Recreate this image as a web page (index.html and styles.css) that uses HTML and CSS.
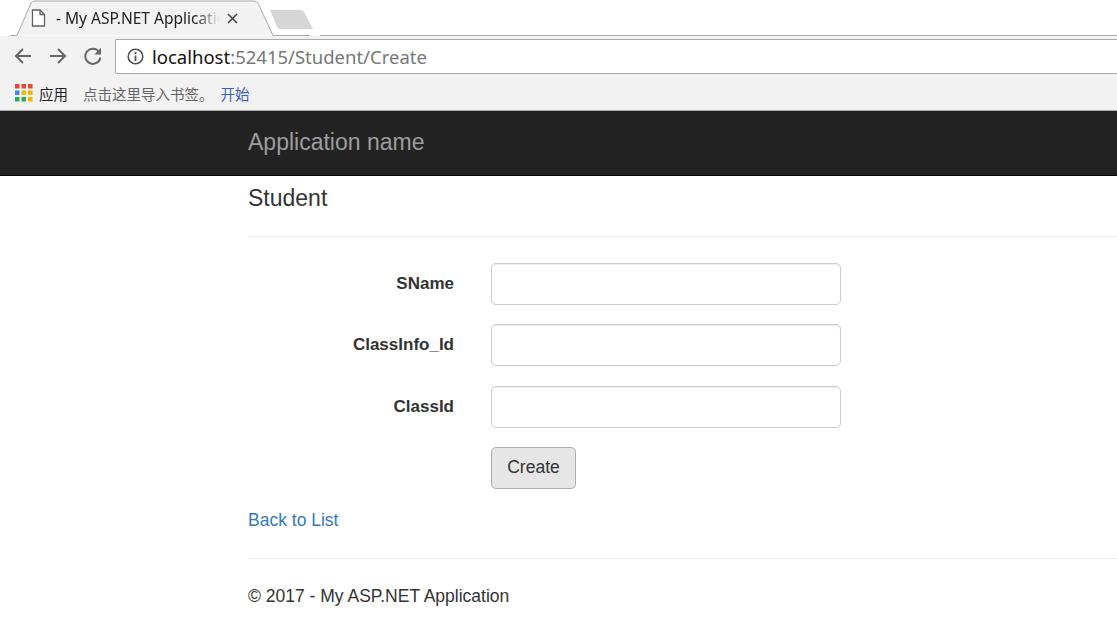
FILE: index.html
```html
<!DOCTYPE html>
<html lang="en">
<head>
    <meta charset="UTF-8">
    <title>Create - My ASP.NET Application</title>
    <link rel="stylesheet" href="styles.css">
</head>
<body>

    <div class="tab-strip">
        <svg class="tab-shape" width="300" height="37" viewBox="0 0 300 37">
            <path d="M0 35.5H7L21 3Q22 1 25 1H244Q247 1 248 3L263 35.5H300" fill="#f2f2f2" stroke="#a9a9a9"/>
            <path d="M261 10H291Q294 10 295 12L304 29H271Q269 29 268 27Z" fill="#d6d6d6" transform="translate(-1 0)"/>
        </svg>
        <div class="tab">
            <svg class="tab-icon" width="15" height="18" viewBox="0 0 15 18">
                <path d="M1.5 1H9L13.5 5.5V17H1.5ZM9 1V5.5H13.5" fill="#fff" stroke="#5f6368" stroke-width="1.3"/>
            </svg>
            <span class="tab-title">- My ASP.NET Application</span>
            <svg class="tab-close" width="11" height="11" viewBox="0 0 11 11">
                <path d="M1 1L10 10M10 1L1 10" stroke="#444" stroke-width="1.5"/>
            </svg>
        </div>
    </div>

    <div class="toolbar">
        <svg class="nav-icon" width="20" height="20" viewBox="0 0 20 20">
            <path d="M18 10H3M10 3L3 10L10 17" fill="none" stroke="#666" stroke-width="2"/>
        </svg>
        <svg class="nav-icon" width="20" height="20" viewBox="0 0 20 20">
            <path d="M2 10H17M10 3L17 10L10 17" fill="none" stroke="#666" stroke-width="2"/>
        </svg>
        <svg class="nav-icon" width="20" height="20" viewBox="0 0 20 20">
            <path d="M16.2 6A7.6 7.6 0 1 0 17.4 11.5" fill="none" stroke="#666" stroke-width="2"/>
            <path d="M18 1.8V8.5H11.3Z" fill="#666"/>
        </svg>
        <div class="address">
            <svg class="info-icon" width="17" height="17" viewBox="0 0 17 17">
                <circle cx="8.5" cy="8.5" r="7.3" fill="none" stroke="#555" stroke-width="1.6"/>
                <path d="M8.5 7.5V13M8.5 4V6" stroke="#555" stroke-width="1.8"/>
            </svg>
            <span class="host">localhost</span><span class="url-rest">:52415/Student/Create</span>
        </div>
    </div>

    <div class="bookmarks">
        <svg class="apps-icon" width="18" height="18" viewBox="0 0 18 18">
            <rect x="0" y="0" width="4.5" height="4.5" fill="#e8453c"/>
            <rect x="6.5" y="0" width="4.5" height="4.5" fill="#e8453c"/>
            <rect x="13" y="0" width="4.5" height="4.5" fill="#e8453c"/>
            <rect x="0" y="6.5" width="4.5" height="4.5" fill="#3f86e8"/>
            <rect x="6.5" y="6.5" width="4.5" height="4.5" fill="#f4b400"/>
            <rect x="13" y="6.5" width="4.5" height="4.5" fill="#f4b400"/>
            <rect x="0" y="13" width="4.5" height="4.5" fill="#34a853"/>
            <rect x="6.5" y="13" width="4.5" height="4.5" fill="#34a853"/>
            <rect x="13" y="13" width="4.5" height="4.5" fill="#f4b400"/>
        </svg>
        <span class="apps-label">应用</span>
        <span class="bookmark-hint">点击这里导入书签。</span>
        <a class="bookmark-link" href="#">开始</a>
    </div>

    <div class="navbar">
        <a class="navbar-brand" href="#">Application name</a>
    </div>

    <div class="container">
        <h4>Student</h4>
        <hr class="hr-top">

        <form class="form-horizontal">
            <div class="form-group">
                <label class="control-label">SName</label>
                <input class="form-control" type="text">
            </div>
            <div class="form-group">
                <label class="control-label">ClassInfo_Id</label>
                <input class="form-control" type="text">
            </div>
            <div class="form-group">
                <label class="control-label">ClassId</label>
                <input class="form-control" type="text">
            </div>
            <div class="form-group">
                <span class="control-label"></span>
                <button class="btn" type="button">Create</button>
            </div>
        </form>

        <a class="back-link" href="#">Back to List</a>
        <hr class="hr-bottom">
        <footer>© 2017 - My ASP.NET Application</footer>
    </div>

</body>
</html>
```

FILE: styles.css
```css
* {
    box-sizing: border-box;
}

html, body {
    height: 622px;
    overflow: hidden;
}

body {
    margin: 0;
    font-family: "Liberation Sans", Arial, sans-serif;
    font-size: 17px;
    color: #333;
    background-color: #fff;
}

a {
    text-decoration: none;
}

/* browser chrome */
.tab-strip {
    position: relative;
    height: 36px;
    background-color: #fff;
}

.tab-shape {
    position: absolute;
    left: 0;
    top: 0;
    width: 100%;
    max-width: 320px;
}

.tab-strip::after {
    content: "";
    position: absolute;
    left: 320px;
    right: 0;
    bottom: 0;
    height: 1px;
    background-color: #a9a9a9;
}

.tab {
    position: relative;
    display: flex;
    align-items: center;
    width: 247px;
    height: 36px;
    padding-left: 31px;
}

.tab-icon {
    flex-shrink: 0;
}

.tab-title {
    width: 164px;
    margin-left: 10px;
    overflow: hidden;
    white-space: nowrap;
    font-family: "Noto Sans", "Liberation Sans", sans-serif;
    font-size: 15.5px;
    color: #222;
    -webkit-mask-image: linear-gradient(to right, #000 85%, transparent 100%);
    mask-image: linear-gradient(to right, #000 85%, transparent 100%);
}

.tab-close {
    margin-left: 7px;
    flex-shrink: 0;
}

.toolbar {
    display: flex;
    align-items: center;
    height: 40px;
    padding: 0 0 0 13px;
    background-color: #f2f2f2;
}

.nav-icon {
    flex-shrink: 0;
    margin-right: 15px;
}

.address {
    display: flex;
    align-items: center;
    flex: 1;
    height: 35px;
    margin-left: -3px;
    padding-left: 11px;
    background-color: #fff;
    border: 1px solid #a9a9a9;
    border-right: none;
    border-radius: 2px 0 0 2px;
    font-family: "Noto Sans", "Liberation Sans", sans-serif;
    font-size: 18.5px;
}

.info-icon {
    margin-right: 8px;
}

.host {
    color: #111;
}

.url-rest {
    color: #777;
}

.bookmarks {
    display: flex;
    align-items: center;
    height: 35px;
    padding-left: 15px;
    background-color: #f2f2f2;
    border-bottom: 1px solid #a9a9a9;
    font-family: "Noto Sans CJK SC", sans-serif;
    font-size: 14.5px;
}

.apps-label {
    margin-left: 6px;
    color: #222;
}

.bookmark-hint {
    margin-left: 15px;
    color: #666;
}

.bookmark-link {
    margin-left: 7px;
    color: #3b5fc0;
}

/* page */
.navbar {
    height: 65px;
    padding-left: 248px;
    background-color: #222;
    border-bottom: 1px solid #080808;
}

.navbar-brand {
    display: block;
    font-size: 23px;
    line-height: 62px;
    color: #9d9d9d;
}

.container {
    padding-left: 248px;
}

h4 {
    margin: 0;
    padding-top: 8px;
    font-size: 23px;
    font-weight: normal;
    line-height: 28px;
    color: #333;
}

hr {
    height: 1px;
    margin: 0;
    border: none;
    background-color: #eee;
}

.hr-top {
    margin-top: 24px;
    margin-bottom: 26px;
}

.form-group {
    display: flex;
    align-items: center;
    gap: 37px;
    margin-bottom: 19.3px;
}

.control-label {
    width: 206px;
    text-align: right;
    font-weight: bold;
}

.form-control {
    width: 350px;
    height: 42px;
    padding: 7px 14px;
    font-size: 17px;
    background-color: #fff;
    border: 1px solid #ccc;
    border-radius: 5px;
    box-shadow: inset 0 1px 1px rgba(0, 0, 0, .075);
}

.btn {
    width: 85px;
    height: 42px;
    padding: 0;
    font-family: inherit;
    font-size: 17.5px;
    color: #333;
    background-color: #e6e6e6;
    border: 1px solid #adadad;
    border-radius: 5px;
}

.back-link {
    display: block;
    margin-top: 10px;
    line-height: 24px;
    font-size: 17.5px;
    color: #337ab7;
}

.hr-bottom {
    margin-top: 26px;
}

footer {
    margin-top: 25px;
    line-height: 24px;
    font-size: 17.5px;
    color: #333;
}
```
